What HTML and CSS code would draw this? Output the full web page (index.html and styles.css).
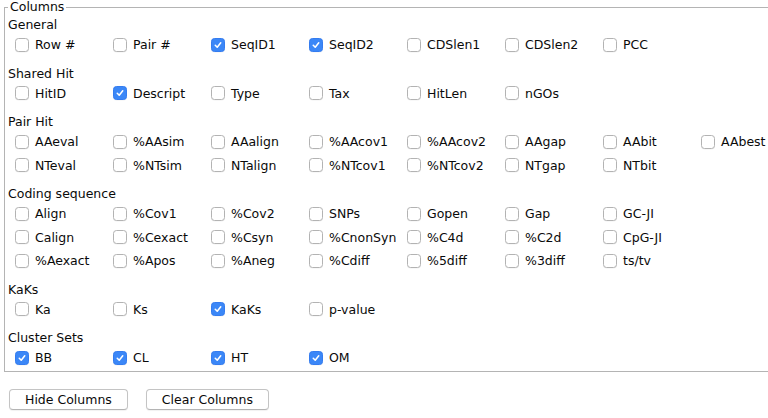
FILE: index.html
```html
<!DOCTYPE html>
<html>
<head>
<meta charset="utf-8">
<link rel="stylesheet" href="styles.css">
</head>
<body>
<fieldset class="panel">
  <legend class="legend">Columns</legend>

  <div class="group">
    <div class="group-title">General</div>
    <div class="grid">
      <label class="cb"><span class="box"></span>Row #</label>
      <label class="cb"><span class="box"></span>Pair #</label>
      <label class="cb"><span class="box on"><svg viewBox="0 0 14 14"><path d="M3.8 7.3 L6.1 9.6 L10.2 4.5"/></svg></span>SeqID1</label>
      <label class="cb"><span class="box on"><svg viewBox="0 0 14 14"><path d="M3.8 7.3 L6.1 9.6 L10.2 4.5"/></svg></span>SeqID2</label>
      <label class="cb"><span class="box"></span>CDSlen1</label>
      <label class="cb"><span class="box"></span>CDSlen2</label>
      <label class="cb"><span class="box"></span>PCC</label>
    </div>
  </div>

  <div class="group">
    <div class="group-title">Shared Hit</div>
    <div class="grid">
      <label class="cb"><span class="box"></span>HitID</label>
      <label class="cb"><span class="box on"><svg viewBox="0 0 14 14"><path d="M3.8 7.3 L6.1 9.6 L10.2 4.5"/></svg></span>Descript</label>
      <label class="cb"><span class="box"></span>Type</label>
      <label class="cb"><span class="box"></span>Tax</label>
      <label class="cb"><span class="box"></span>HitLen</label>
      <label class="cb"><span class="box"></span>nGOs</label>
    </div>
  </div>

  <div class="group">
    <div class="group-title">Pair Hit</div>
    <div class="grid">
      <label class="cb"><span class="box"></span>AAeval</label>
      <label class="cb"><span class="box"></span>%AAsim</label>
      <label class="cb"><span class="box"></span>AAalign</label>
      <label class="cb"><span class="box"></span>%AAcov1</label>
      <label class="cb"><span class="box"></span>%AAcov2</label>
      <label class="cb"><span class="box"></span>AAgap</label>
      <label class="cb"><span class="box"></span>AAbit</label>
      <label class="cb"><span class="box"></span>AAbest</label>
      <label class="cb"><span class="box"></span>NTeval</label>
      <label class="cb"><span class="box"></span>%NTsim</label>
      <label class="cb"><span class="box"></span>NTalign</label>
      <label class="cb"><span class="box"></span>%NTcov1</label>
      <label class="cb"><span class="box"></span>%NTcov2</label>
      <label class="cb"><span class="box"></span>NTgap</label>
      <label class="cb"><span class="box"></span>NTbit</label>
    </div>
  </div>

  <div class="group">
    <div class="group-title">Coding sequence</div>
    <div class="grid">
      <label class="cb"><span class="box"></span>Align</label>
      <label class="cb"><span class="box"></span>%Cov1</label>
      <label class="cb"><span class="box"></span>%Cov2</label>
      <label class="cb"><span class="box"></span>SNPs</label>
      <label class="cb"><span class="box"></span>Gopen</label>
      <label class="cb"><span class="box"></span>Gap</label>
      <label class="cb"><span class="box"></span>GC-JI</label>
      <span class="cell-empty"></span>
      <label class="cb"><span class="box"></span>Calign</label>
      <label class="cb"><span class="box"></span>%Cexact</label>
      <label class="cb"><span class="box"></span>%Csyn</label>
      <label class="cb"><span class="box"></span>%CnonSyn</label>
      <label class="cb"><span class="box"></span>%C4d</label>
      <label class="cb"><span class="box"></span>%C2d</label>
      <label class="cb"><span class="box"></span>CpG-JI</label>
      <span class="cell-empty"></span>
      <label class="cb"><span class="box"></span>%Aexact</label>
      <label class="cb"><span class="box"></span>%Apos</label>
      <label class="cb"><span class="box"></span>%Aneg</label>
      <label class="cb"><span class="box"></span>%Cdiff</label>
      <label class="cb"><span class="box"></span>%5diff</label>
      <label class="cb"><span class="box"></span>%3diff</label>
      <label class="cb"><span class="box"></span>ts/tv</label>
    </div>
  </div>

  <div class="group">
    <div class="group-title">KaKs</div>
    <div class="grid">
      <label class="cb"><span class="box"></span>Ka</label>
      <label class="cb"><span class="box"></span>Ks</label>
      <label class="cb"><span class="box on"><svg viewBox="0 0 14 14"><path d="M3.8 7.3 L6.1 9.6 L10.2 4.5"/></svg></span>KaKs</label>
      <label class="cb"><span class="box"></span>p-value</label>
    </div>
  </div>

  <div class="group">
    <div class="group-title">Cluster Sets</div>
    <div class="grid">
      <label class="cb"><span class="box on"><svg viewBox="0 0 14 14"><path d="M3.8 7.3 L6.1 9.6 L10.2 4.5"/></svg></span>BB</label>
      <label class="cb"><span class="box on"><svg viewBox="0 0 14 14"><path d="M3.8 7.3 L6.1 9.6 L10.2 4.5"/></svg></span>CL</label>
      <label class="cb"><span class="box on"><svg viewBox="0 0 14 14"><path d="M3.8 7.3 L6.1 9.6 L10.2 4.5"/></svg></span>HT</label>
      <label class="cb"><span class="box on"><svg viewBox="0 0 14 14"><path d="M3.8 7.3 L6.1 9.6 L10.2 4.5"/></svg></span>OM</label>
    </div>
  </div>
</fieldset>

<div class="actions">
  <button class="btn">Hide Columns</button>
  <button class="btn">Clear Columns</button>
</div>
</body>
</html>
```

FILE: styles.css
```css
html, body {
  margin: 0;
  padding: 0;
  overflow: hidden;
  background: #ffffff;
}

body {
  font-family: "DejaVu Sans", "Liberation Sans", sans-serif;
  font-size: 12.5px;
  color: #0a0a0a;
  width: 768px;
  height: 418px;
}

.panel {
  margin: 0 0 0 4px;
  padding: 0 0 1px 3px;
  border: 1px solid #b4b4b4;
  width: 790px;
  box-sizing: border-box;
}

.legend {
  padding: 0 2px 0 2px;
  margin-left: 0;
  line-height: 14px;
  height: 14px;
}

.group {
  margin-top: 8px;
}

.group:first-of-type {
  margin-top: 2px;
}

.group-title {
  height: 17px;
  line-height: 17px;
}

.grid {
  display: grid;
  grid-template-columns: repeat(8, 98px);
  grid-auto-rows: 23.5px;
  padding-left: 7px;
}

.cb {
  display: flex;
  align-items: center;
  white-space: nowrap;
}

.box {
  width: 14px;
  height: 14px;
  box-sizing: border-box;
  border: 1px solid #b3b3b3;
  border-radius: 3.5px;
  background: #ffffff;
  margin-right: 6px;
  flex: none;
  display: flex;
  align-items: center;
  justify-content: center;
  box-shadow: 0 0.5px 0.5px rgba(0, 0, 0, 0.06);
}

.box.on {
  background: #3b87f7;
  border-color: #347cf0;
}

.box svg {
  width: 14px;
  height: 14px;
}

.box svg path {
  fill: none;
  stroke: #ffffff;
  stroke-width: 1.8;
  stroke-linecap: round;
  stroke-linejoin: round;
}

.actions {
  display: flex;
  gap: 18px;
  margin: 17px 0 0 9px;
}

.btn {
  font-family: inherit;
  font-size: 12.5px;
  color: #0a0a0a;
  height: 21px;
  padding: 0 15px;
  background: #ffffff;
  border: 1px solid #c4c4c4;
  border-bottom-color: #b4b4b4;
  border-radius: 4px;
  box-shadow: 0 1px 1px rgba(0, 0, 0, 0.06);
  line-height: 19px;
}
```
